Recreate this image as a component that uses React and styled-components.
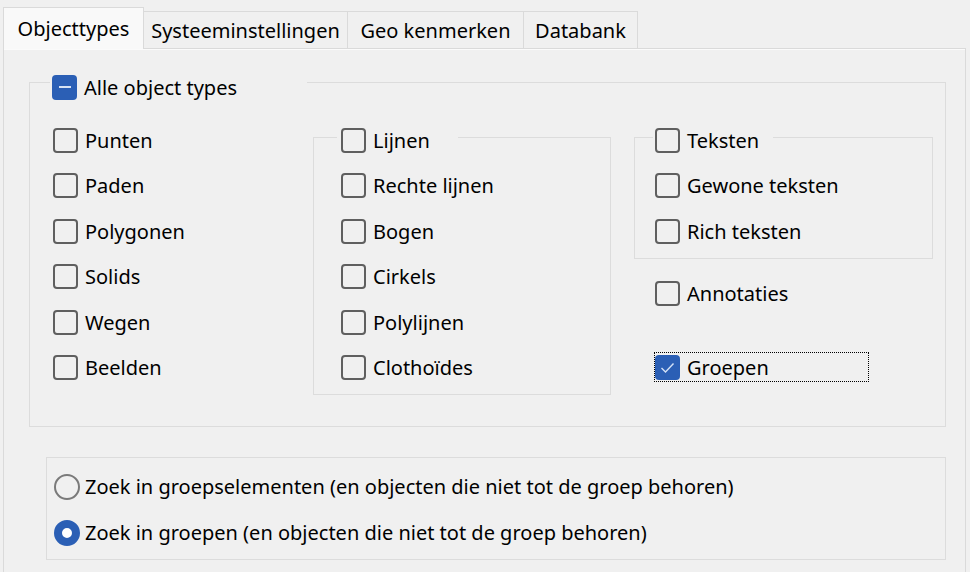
import React from "react";
import styled, { createGlobalStyle } from "styled-components";

const GlobalStyle = createGlobalStyle`
  html, body {
    margin: 0;
    padding: 0;
    background: #f0f0f0;
    overflow: hidden;
  }
  body {
    font-family: "Noto Sans", "Open Sans", Arial, sans-serif;
    font-size: 20px;
    color: #000;
  }
`;

const Window = styled.div`
  width: 970px;
  height: 572px;
  padding-left: 3px;
  box-sizing: border-box;
`;

const TabStrip = styled.div`
  display: flex;
  align-items: flex-end;
  height: 48px;
`;

const Tab = styled.div`
  position: relative;
  z-index: ${(p) => (p.$active ? 1 : 0)};
  width: ${(p) => p.$width}px;
  height: ${(p) => (p.$active ? 42 : 37)}px;
  margin-bottom: ${(p) => (p.$active ? -1 : 0)}px;
  box-sizing: border-box;
  display: flex;
  align-items: center;
  justify-content: center;
  background: ${(p) => (p.$active ? "#f9f9f9" : "#f0f0f0")};
  border: 1px solid #dadada;
  border-bottom: none;
  border-left: ${(p) => (p.$active ? "1px solid #dadada" : "none")};
  white-space: nowrap;
`;

const Panel = styled.div`
  width: 963px;
  height: 540px;
  box-sizing: border-box;
  border: 1px solid #dadada;
  box-shadow: inset 0 1px 0 #fbfbfb;
  padding-top: 15px;
  display: flex;
  flex-direction: column;
`;

const Group = styled.fieldset`
  margin: 0;
  min-inline-size: 0;
  border: 1px solid #dcdcdc;
  box-sizing: border-box;
  padding: ${(p) => p.$pad};
  width: ${(p) => p.$width}px;
`;

const Legend = styled.legend`
  padding: ${(p) => p.$top}px 0 0 ${(p) => p.$gap}px;
  margin-left: -${(p) => p.$gap}px;
  width: ${(p) => p.$width}px;
  box-sizing: border-box;
`;

const MainGroup = styled(Group)`
  margin-left: 25px;
`;

const RadioGroup = styled(Group)`
  margin: 30px 0 0 42px;
  display: flex;
  flex-direction: column;
  gap: 20px;
`;

const Columns = styled.div`
  display: grid;
  grid-template-columns: 237px 298px 299px;
  column-gap: 23px;
  align-items: start;
`;

const List = styled.div`
  display: flex;
  flex-direction: column;
  gap: 19.6px;
  margin-top: ${(p) => p.$top || 0}px;
`;

const Side = styled.div`
  display: flex;
  flex-direction: column;
  align-items: flex-start;
`;

const Row = styled.label`
  display: flex;
  align-items: center;
  gap: 7px;
  height: 26px;
  white-space: nowrap;
  margin-left: ${(p) => p.$indent || 0}px;
  margin-top: ${(p) => p.$top || 0}px;
`;

const FocusRow = styled(Row)`
  width: 215px;
  height: 30px;
  box-sizing: border-box;
  border: 1px dotted #000;
  padding-left: 0;
`;

const Box = styled.span`
  flex: none;
  width: 25px;
  height: 25px;
  box-sizing: border-box;
  border-radius: 4px;
  border: ${(p) => (p.$on ? "none" : "2px solid #5f5f5f")};
  background: ${(p) => (p.$on ? "#2b5fb5" : "transparent")};
  display: flex;
  align-items: center;
  justify-content: center;
`;

const Dash = styled.span`
  width: 12px;
  height: 2px;
  background: #d8e3f4;
`;

const Round = styled.span`
  flex: none;
  width: 26px;
  height: 26px;
  box-sizing: border-box;
  border-radius: 50%;
  border: ${(p) => (p.$on ? "8.5px solid #2b5fb5" : "2px solid #7a7a7a")};
  background: ${(p) => (p.$on ? "#fff" : "transparent")};
`;

const RadioRow = styled(Row)`
  gap: 5px;
`;

function Check({ label, state, indent, top }) {
  return (
    <Row $indent={indent} $top={top}>
      <CheckMark state={state} />
      {label}
    </Row>
  );
}

function CheckMark({ state }) {
  if (state === "mixed")
    return (
      <Box $on>
        <Dash />
      </Box>
    );
  if (state === "on")
    return (
      <Box $on>
        <svg width="25" height="25" viewBox="0 0 25 25">
          <polyline
            points="6.5,13 10.5,17 18.5,8.5"
            fill="none"
            stroke="#d4e2f6"
            strokeWidth="1.4"
          />
        </svg>
      </Box>
    );
  return <Box />;
}

const tabs = [
  { name: "Objecttypes", width: 141 },
  { name: "Systeeminstellingen", width: 204 },
  { name: "Geo kenmerken", width: 176 },
  { name: "Databank", width: 114 },
];

const punten = ["Punten", "Paden", "Polygonen", "Solids", "Wegen", "Beelden"];
const lijnen = ["Rechte lijnen", "Bogen", "Cirkels", "Polylijnen", "Clothoïdes"];
const teksten = ["Gewone teksten", "Rich teksten"];

export default function App() {
  return (
    <>
      <GlobalStyle />
      <Window>
        <TabStrip>
          {tabs.map((t, i) => (
            <Tab key={t.name} $active={i === 0} $width={t.width}>
              {t.name}
            </Tab>
          ))}
        </TabStrip>
        <Panel>
          <MainGroup $width={917} $pad="21px 11px 31px 23px">
            <Legend $top={10} $gap={3} $width={257}>
              <Check label="Alle object types" state="mixed" indent={-1} />
            </Legend>
            <Columns>
              <List $top={6}>
                {punten.map((p) => (
                  <Check key={p} label={p} />
                ))}
              </List>
              <Group $width={298} $pad="19.6px 0 13px 27px">
                <Legend $top={6} $gap={4} $width={121}>
                  <Check label="Lijnen" />
                </Legend>
                <List>
                  {lijnen.map((p) => (
                    <Check key={p} label={p} />
                  ))}
                </List>
              </Group>
              <Side>
                <Group $width={299} $pad="19.6px 0 14px 20px">
                  <Legend $top={6} $gap={2} $width={120}>
                    <Check label="Teksten" />
                  </Legend>
                  <List>
                    {teksten.map((p) => (
                      <Check key={p} label={p} />
                    ))}
                  </List>
                </Group>
                <Check label="Annotaties" indent={21} top={21} />
                <FocusRow $indent={20} $top={46}>
                  <CheckMark state="on" />
                  Groepen
                </FocusRow>
              </Side>
            </Columns>
          </MainGroup>
          <RadioGroup $width={900} $pad="16px 0 13px 7px">
            <RadioRow>
              <Round />
              Zoek in groepselementen (en objecten die niet tot de groep behoren)
            </RadioRow>
            <RadioRow>
              <Round $on />
              Zoek in groepen (en objecten die niet tot de groep behoren)
            </RadioRow>
          </RadioGroup>
        </Panel>
      </Window>
    </>
  );
}
